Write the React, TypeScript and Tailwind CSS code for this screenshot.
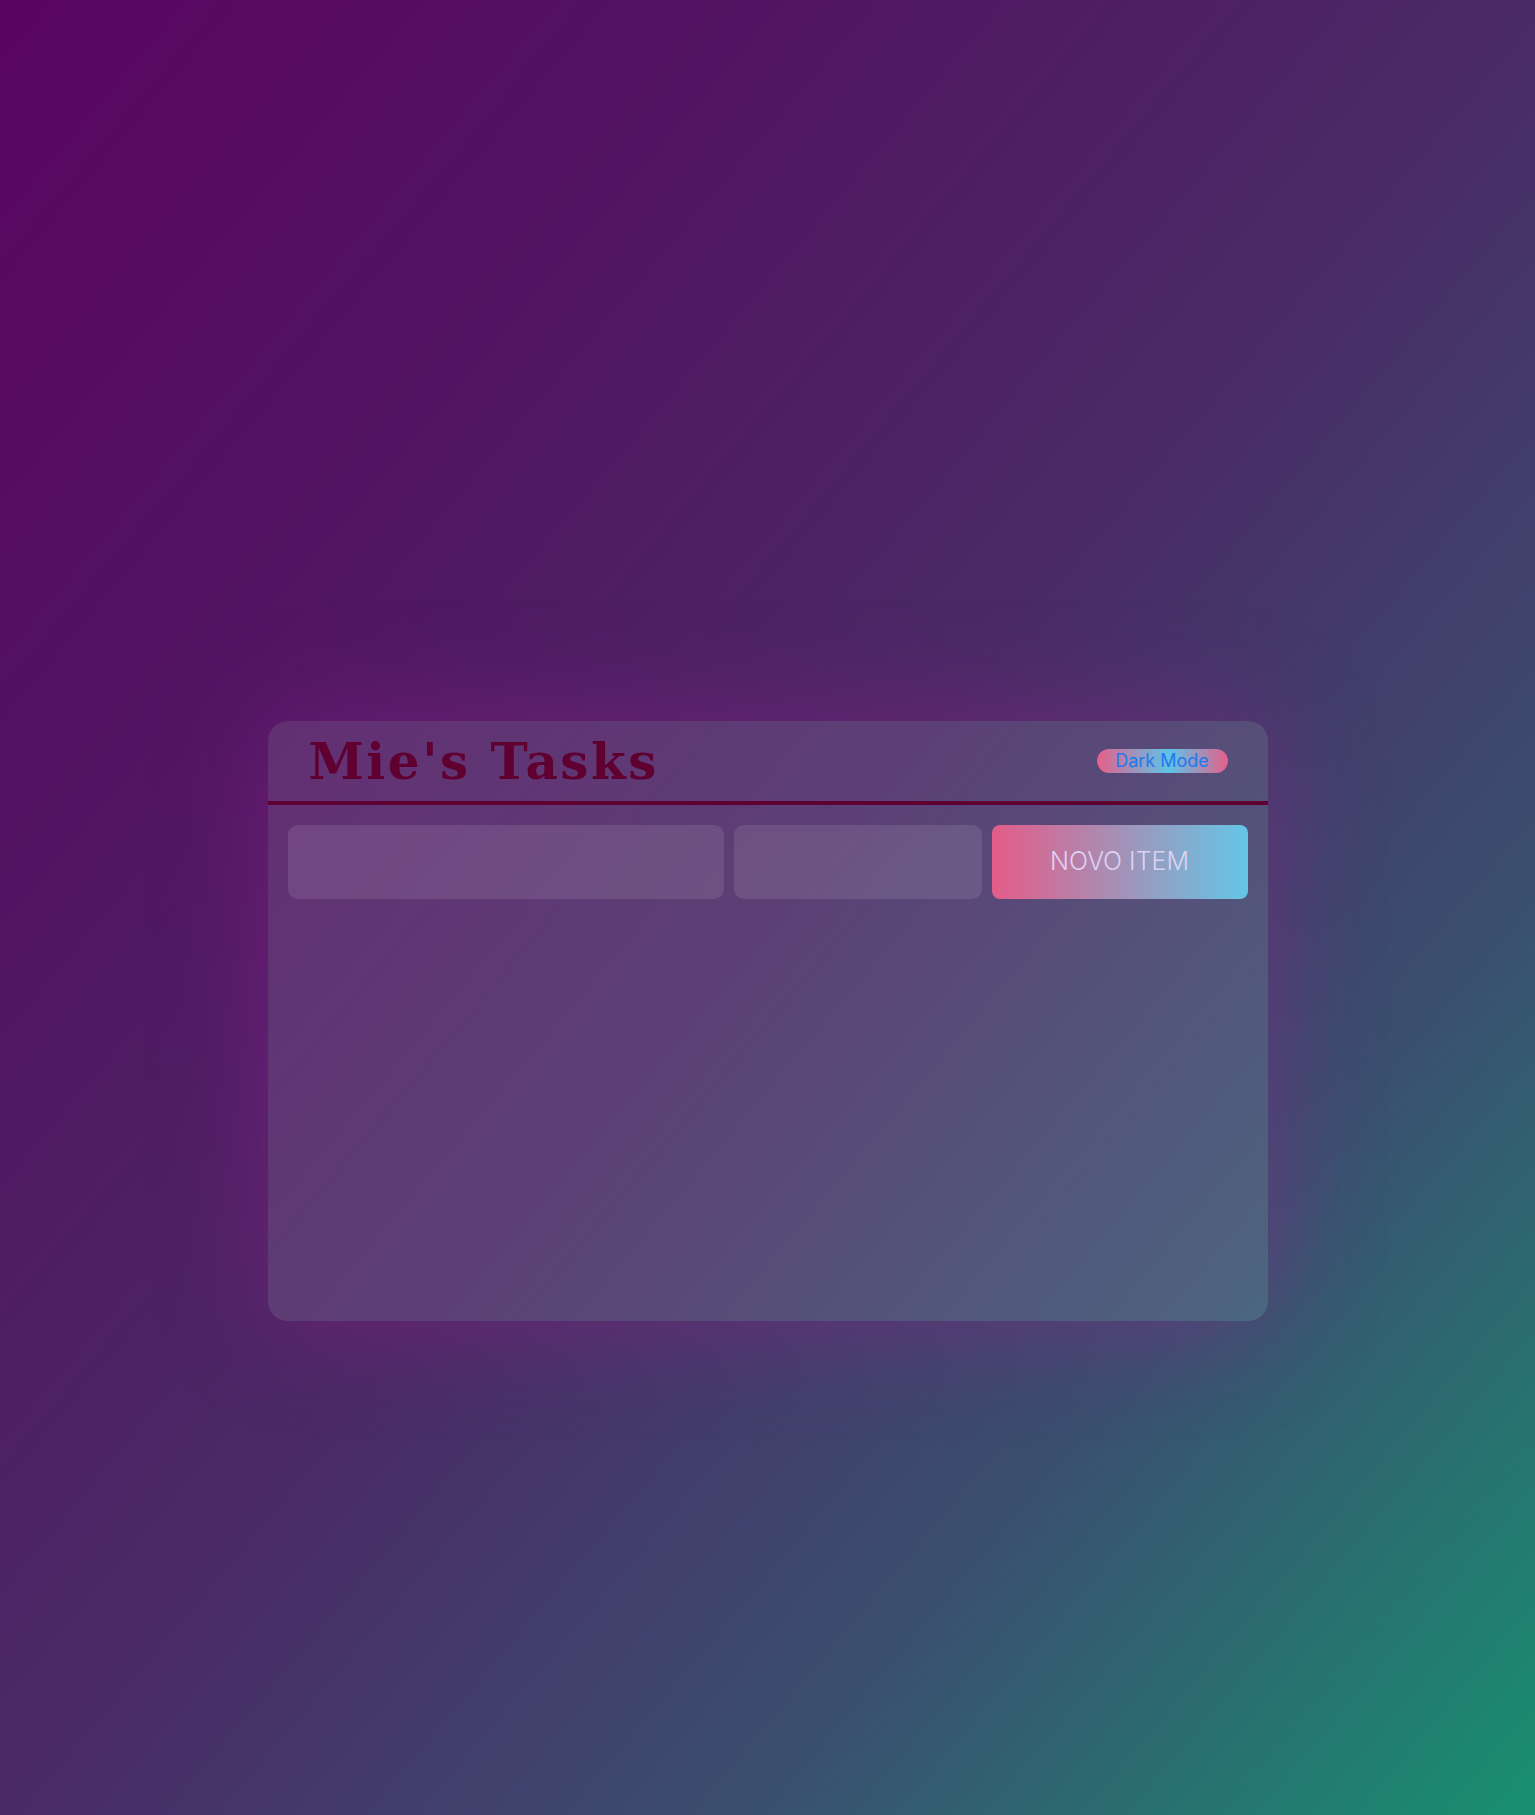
import React from "react";

export default function App() {
  return (
    <div className="min-h-[1815px] w-full bg-[linear-gradient(to_bottom_right,#5a0560_0%,#521462_25%,#4a2a66_50%,#3a5070_75%,#189070_100%)] flex flex-col items-center pt-[721px]">
      <div className="w-[1000px] h-[600px] rounded-[20px] bg-white/10 shadow-[0_0_110px_rgba(150,30,140,0.45)] flex flex-col">
        <div className="h-[84px] border-b-4 border-[#5e0032] flex items-center justify-between pl-[41px] pr-[40px]">
          <h1
            className="text-[#5f0031] font-bold text-[50px] tracking-[0.05em] leading-none pt-[2px]"
            style={{ fontFamily: '"DejaVu Serif", serif' }}
          >
            Mie's Tasks
          </h1>
          <button
            className="w-[131px] h-[24px] rounded-full bg-[linear-gradient(to_right,#e4608a_0%,#5ec4e8_55%,#e4608a_100%)] text-[#2478ec] text-[18px] leading-none flex items-center justify-center"
            style={{ fontFamily: 'Inter, sans-serif' }}
          >
            Dark Mode
          </button>
        </div>
        <div className="flex gap-[10px] px-[20px] pt-[20px]">
          <input className="w-[436px] h-[74px] rounded-[10px] bg-white/10 outline-none" />
          <input className="w-[248px] h-[74px] rounded-[10px] bg-white/10 outline-none" />
          <button
            className="w-[256px] h-[74px] rounded-[8px] bg-[linear-gradient(to_right,#e45c88,#64c6e6)] text-[#dcd2f2] text-[25px] font-light"
            style={{ fontFamily: 'Inter, sans-serif' }}
          >
            NOVO ITEM
          </button>
        </div>
      </div>
    </div>
  );
}
